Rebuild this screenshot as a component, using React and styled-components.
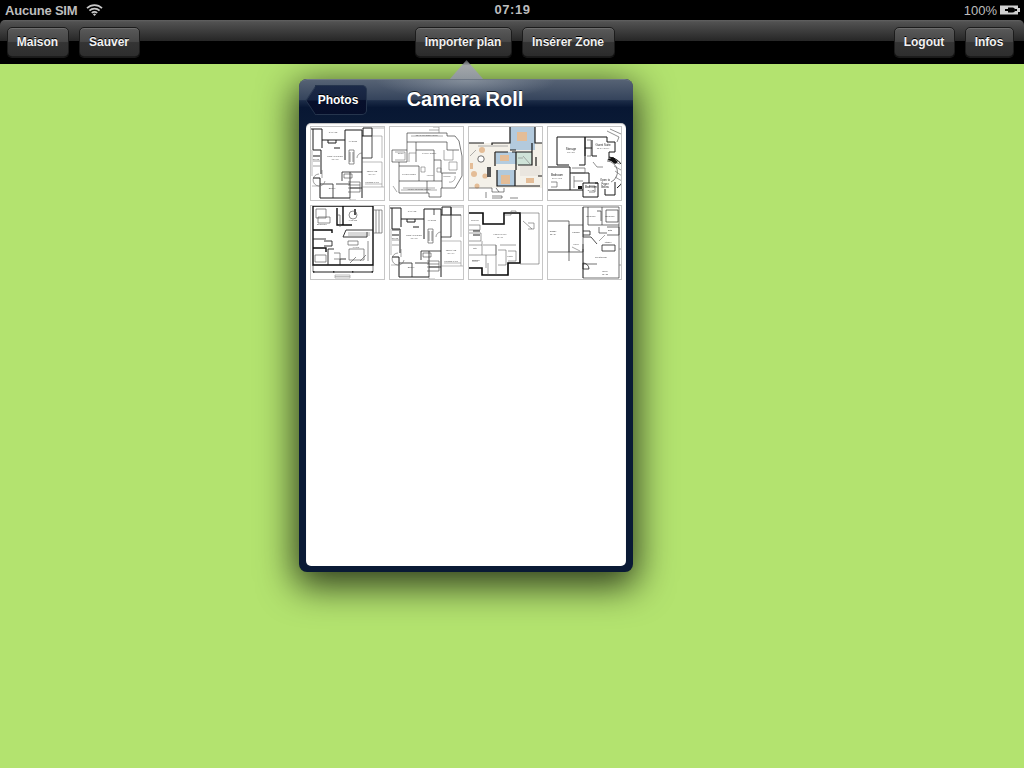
import styled, { createGlobalStyle } from 'styled-components'

const GlobalStyle = createGlobalStyle`
  html, body { margin: 0; padding: 0; height: 100%; overflow: hidden; }
  body { font-family: "Liberation Sans", Arial, sans-serif; background: #b3e36f; }
  #root { height: 100%; }
`

const Screen = styled.div`
  position: relative;
  display: flex;
  flex-direction: column;
  width: 1024px;
  height: 768px;
  background: #b3e36f;
  overflow: hidden;
`
const TopBars = styled.div`
  background: #000;
`
const StatusBar = styled.div`
  display: grid;
  grid-template-columns: 1fr auto 1fr;
  align-items: center;
  height: 20px;
  padding: 0 4px 0 5px;
  color: #bdbdbd;
  font-size: 13px;
  font-weight: bold;
`
const StatusLeft = styled.div`
  display: flex;
  align-items: center;
  gap: 9px;
  letter-spacing: -0.2px;
`
const StatusRight = styled.div`
  display: flex;
  align-items: center;
  justify-content: flex-end;
  gap: 3px;
  font-weight: normal;
`
const Clock = styled.div`
  letter-spacing: 0.6px;
  margin-top: -1px;
`
const Toolbar = styled.div`
  display: flex;
  justify-content: space-between;
  align-items: center;
  height: 44px;
  padding: 0 10px 0 7px;
  box-sizing: border-box;
  border-radius: 5px 5px 0 0;
  background: linear-gradient(#626262 0, #515151 2px, #262626 21px, #000 21px, #000 100%);
`
const Group = styled.div`
  display: flex;
  gap: 10px;
  margin-right: ${p => p.$shift || 0}px;
`
const BarButton = styled.button`
  height: 30px;
  padding: 0 1px 0 0;
  width: ${p => p.$w}px;
  box-sizing: border-box;
  border: 1px solid #1c1c1c;
  border-radius: 5px;
  background: linear-gradient(#5a5a5a 0, #474747 48%, #343434 52%, #2e2e2e 100%);
  box-shadow: inset 0 1px 0 rgba(255, 255, 255, 0.12), 0 1px 0 rgba(255, 255, 255, 0.1);
  color: #f2f2f2;
  font: bold 12px "Liberation Sans", Arial, sans-serif;
  text-shadow: 0 -1px 0 #000;
`
const Popover = styled.div`
  position: absolute;
  left: 299px;
  top: 79px;
  display: flex;
  flex-direction: column;
  width: 334px;
  height: 493px;
  padding: 0 7px 6px;
  box-sizing: border-box;
  border-radius: 8px;
  background: #0a1a35;
  box-shadow: 0 10px 36px 4px rgba(0, 0, 0, 0.74);
`
const Arrow = styled.div`
  position: absolute;
  left: 150px;
  top: -19px;
  width: 35px;
  height: 20px;
  background: linear-gradient(#3c3f42 0, #a3a7aa 28%, #8d959c 100%);
  clip-path: polygon(50% 0, 100% 100%, 0 100%);
`
const PopHeader = styled.div`
  position: relative;
  display: flex;
  align-items: center;
  justify-content: center;
  height: 44px;
  margin: 0 -7px;
  padding-bottom: 4px;
  border-radius: 8px 8px 0 0;
  border-top: 1px solid #6d7785;
  box-sizing: border-box;
  background:
    radial-gradient(ellipse 90px 20px at 50% 0, rgba(170, 178, 186, 0.55), transparent),
    linear-gradient(#566274 0, #35445c 46%, #1c2c47 48%, #081733 64%, #0a1a35 100%);
`
const Title = styled.div`
  margin-left: -2px;
  color: #fff;
  font-size: 20px;
  font-weight: bold;
  text-shadow: 0 -1px 0 rgba(0, 0, 0, 0.7);
`
const BackButton = styled.button`
  position: absolute;
  left: 16px;
  top: 5px;
  width: 52px;
  height: 30px;
  padding: 0 5px 0 0;
  border: 1px solid #26354d;
  border-left: 0;
  border-radius: 0 5px 5px 0;
  background: linear-gradient(#1c2a48 0, #16233f 48%, #070f2b 52%, #060e2a 100%);
  color: #fff;
  font: bold 12px "Liberation Sans", Arial, sans-serif;
  text-shadow: 0 -1px 0 #000;
  &::before {
    content: "";
    position: absolute;
    left: -10.5px;
    top: 3.5px;
    width: 21px;
    height: 21px;
    box-sizing: border-box;
    border-left: 1px solid #26354d;
    border-bottom: 1px solid #26354d;
    background: linear-gradient(135deg, #1c2a48 0, #16233f 49%, #070f2b 51%, #060e2a 100%);
    transform: scaleX(0.67) rotate(45deg);
  }
  span { position: relative; }
`
const Panel = styled.div`
  flex: 1;
  display: flex;
  flex-direction: column;
  border-radius: 5px;
  background: #fff;
  box-shadow: inset 0 1px 1px rgba(0, 0, 0, 0.25);
  padding: 3px 0 0 4px;
`
const Grid = styled.div`
  display: grid;
  grid-template-columns: repeat(4, 75px);
  grid-auto-rows: 75px;
  gap: 4px;
`
const Thumb = styled.svg`
  display: block;
  width: 75px;
  height: 75px;
  outline: 1px solid #c6c6c6;
  outline-offset: -1px;
  background: #fff;
  text { font-family: "Liberation Sans", Arial, sans-serif; }
`
const Art = styled.g`
  filter: blur(0.28px);
`

const Wall = ({ d, w = 1.2, c = '#111' }) => <path d={d} fill="none" stroke={c} strokeWidth={w} />
const Thin = ({ d, c = '#444', w = 0.65 }) => <path d={d} fill="none" stroke={c} strokeWidth={w} />
const Label = ({ x, y, s = 2, c = '#555', t }) => <text x={x} y={y} fontSize={s} fill={c} textAnchor="middle">{t}</text>

const WideHousePlan = ({ variant }) => (
  <>
    <Wall w={1} c="#1c1c1c" d="M1 3H12V14H35V4H52V10H62V2H53V10M52 10V72M3 3V24H11V48M12 14V22M35 14V34M10 72H40M10 52V72M3 52H10M3 30H10M30 22H24M18 14V17H26V14" />
    <Wall w={0.8} c="#222" d="M52 32H62V10M40 46V72M40 62H52M23 58V72M10 58H23M32 46H52M32 46V55M26 58H40" />
    <Thin d="M39 24H44V38H39ZM40 26V36M43 26V36M34 48H42V52H34ZM38 56H50V66H38M38 59H50M38 62H50" c="#444" w={0.6} />
    <Thin d="M52 36H72M72 36V61M52 61H74M55 58H72M62 2H75M62 10H72V32M2 24V50M2 60H10V70M40 72V74H46" c="#777" w={0.5} />
    <Thin d="M9 48A6 6 0 1 0 15 55M47 32A5 5 0 0 1 52 27M12 52V44M10 40H3M10 35H3" c="#555" w={0.55} />
    <Label x={23} y={7} s={2} t="GARAGE" />
    <Label x={25} y={31} s={2.4} t="GREAT ROOM" />
    <Label x={25} y={34} s={2} t="18 X 18" />
    <Label x={62} y={46} s={2.2} t="TERRACE" />
    <Label x={62} y={49} s={2} t="20 X 14" />
    <Label x={43} y={16} s={2} t="MASTER" />
    <Label x={22} y={63} s={2.2} t="BDRM" />
    <Label x={6} y={34} s={1.8} t="OFFICE" />
    <Label x={62} y={57} s={1.7} t="COVERED PATIO" />
    {variant && <Wall w={0.8} c="#222" d="M62 2V10H72M10 25H3M45 4V10" />}
  </>
)

const plans = [
  <WideHousePlan key="p1" />,
  <g key="p2">
    <Thin c="#333" w={0.65} d="M18 16V7H58V10H66L70 15L73 30V50L66 62H52V71H40V67H10V36H3V24H18V16M18 16H58V24M58 24H70M18 24V36H10M27 16V36M27 24H45V34H52V47H67M30 40H10M30 40V55M10 55H53M53 47V62M38 55V67M45 34V55" />
    <Thin c="#666" w={0.55} d="M22 10H54M40 4H50V7M44 1H50V4M6 26H16V34H6M27 27H20V36M55 24V34H64V24M60 36H68V44H60ZM32 41H36V46H32ZM48 42H52V46H48ZM14 62H46M12 64H48M4 60L8 66M66 50A5 5 0 0 1 60 56" />
    <Label x={38} y={10} s={1.9} t="REAR COVERED PORCH" />
    <Label x={40} y={28} s={2.1} t="FAMILY ROOM" />
    <Label x={20} y={49} s={2.1} t="LIVING ROOM" />
    <Label x={41} y={50} s={1.9} t="FOYER" />
    <Label x={58} y={51} s={2} t="DINING" />
    <Label x={30} y={64} s={1.8} t="FRONT COVERED PORCH" />
    <Label x={12} y={28} s={1.9} t="STUDY" />
  </g>,
  <g key="p3">
    <rect x="0" y="17" width="75" height="45" fill="#f4f1e9" />
    <rect x="42" y="0" width="25" height="24" fill="#b3cadd" />
    <rect x="28" y="26" width="20" height="12" fill="#b4cde0" />
    <rect x="29" y="44" width="18" height="16" fill="#b1c9dc" />
    <rect x="48" y="26" width="16" height="13" fill="#cfe3d8" />
    <rect x="52" y="40" width="20" height="10" fill="#eae6df" />
    <g fill="#e4bd97">
      <rect x="49" y="6" width="10" height="9" />
      <rect x="33" y="49" width="9" height="9" />
      <rect x="32" y="29" width="9" height="6" />
      <circle cx="14" cy="24" r="3" />
      <circle cx="6" cy="48" r="3" />
      <circle cx="17" cy="50" r="2.6" />
      <circle cx="9" cy="60" r="2.5" />
      <rect x="2" y="37" width="3" height="6" />
      <rect x="58" y="52" width="8" height="5" />
    </g>
    <rect x="19" y="41" width="4" height="10" fill="#555" />
    <circle cx="13" cy="33" r="3.2" fill="#fff" stroke="#333" strokeWidth="0.7" />
    <Wall w={1.2} c="#181818" d="M42 0H67V17H75M42 0V17H24V19M0 17H16M42 24H48M27 26V40M27 26H40M44 26H48V44M29 44V60H47M47 44V60H72M48 26H64V39H50M64 26V17M68 31V40M70 50H75" />
    <Thin c="#444" d="M0 62H24V66H36V62M28 62L31 66M18 66V72M42 72H50M24 70H34V72H24" />
    <Thin c="#888" d="M55 30L62 38M50 32H55M10 20H40M2 30L8 24" />
  </g>,
  <g key="p4">
    <Wall w={1} c="#161616" d="M10 11H38V39H32M10 11V39H22M38 11H60V16H68V26H62M38 11V30M38 22H45M45 14V30H50M62 26V34M0 41H23V47M0 41V64H23V47M23 64H36V71H51V57H36V64M23 47H42V57M51 57H48M68 56V69H58V63" />
    <path d="M62 31A17 17 0 0 1 70 62" fill="none" stroke="#111" strokeWidth="1" />
    <path d="M60 35A11 11 0 0 1 64 56" fill="none" stroke="#333" strokeWidth="0.6" />
    <path d="M66 36L73 38M67 40L74 44M68 45L75 50M68 51L75 55" fill="none" stroke="#555" strokeWidth="0.55" />
    <path d="M60 34L66 31L71 36L68 38L64 35Z" fill="#111" />
    <rect x="31" y="60" width="4" height="3" fill="#111" />
    <Thin c="#555" d="M60 5L72 11L70 16M63 3L74 8M25 42H38V47H25M27 50V62M27 55H36M4 56H10V61H4M40 14H44V30H40M42 60H48V66H42M46 36L50 41H56" />
    <Label x={24} y={24} s={3} c="#222" t="Storage" />
    <Label x={24} y={27} s={2} c="#444" t="18' x 18'" />
    <Label x={56} y={20} s={2.9} c="#222" t="Guest Suite" />
    <Label x={56} y={23} s={2} c="#444" t="13'-0&quot; x 13'-0&quot;" />
    <Label x={10} y={50} s={3} c="#222" t="Bedroom" />
    <Label x={10} y={53} s={2} c="#444" t="10'-0&quot; x 12'" />
    <Label x={44} y={62} s={3} c="#222" t="Bedroom" />
    <Label x={44} y={65} s={2} c="#444" t="11' x 12'" />
    <Label x={58} y={55} s={2.8} c="#222" t="Open to" />
    <Label x={58} y={58.5} s={2.8} c="#222" t="Foyer" />
    <Label x={58} y={62} s={2.8} c="#222" t="Below" />
  </g>,
  <g key="p5">
    <Wall w={1.4} c="#0a0a0a" d="M3 1H63V60H3V1M3 25H22V28M3 43H16V47M33 1V20H42M27 3V20H33M45 4V10" />
    <Wall w={0.9} c="#222" d="M36 25H63M36 25L33 32H57V27M3 34H16M14 41H22V36H14M18 60V44H24M36 54H30V60" />
    <Thin c="#555" d="M63 5H72V28H63M66 5V28M69 5V28M6 4H16V13H6ZM8 12H20V18H8ZM28 10H30V22M5 50H16V57H5ZM24 48H30V54H24M38 36H48V40H38ZM39 44H54V55H39ZM50 56L56 50M40 58L46 52M58 36V56M39 10A4 4 0 1 0 47 10A4 4 0 1 0 39 10" />
    <Thin c="#333" d="M3 60V67H63V60M3 67H63" />
    <path d="M3 66.2h1.4v1.4H3ZM23 66.2h1.4v1.4H23ZM42 66.2h1.4v1.4H42ZM61.6 66.2H63v1.4h-1.4Z" fill="#111" />
    <Thin c="#999" d="M25 70H40V73H25ZM25 71.5H40" />
    <Thin c="#888" d="M38 30H60M38 28H60" />
    <Label x={12} y={20} s={1.9} t="BEDROOM" />
    <Label x={43} y={16} s={1.9} t="KITCHEN" />
    <Label x={46} y={43} s={2} t="LIVING" />
  </g>,
  <WideHousePlan key="p6" variant />,
  <g key="p7">
    <Wall w={1.6} c="#080808" d="M0 8H15V19H36V8H52V58H40V70H14V63H0" />
    <Thin c="#555" w={0.55} d="M52 8H71V59H52M60 18H66V24H60M55 16L64 24M0 20H12V25H0M0 28H13V36H0M0 40H14M14 36V50M0 50H18V63M18 50H28V40H15M28 40V70M20 58V70M32 40H48M30 45H38V60H30M40 46H48V56H40M36 19V10H43V6H48V8M10 56H4" />
    <path d="M5 26H12M5 30H12" fill="none" stroke="#222" strokeWidth="1.2" />
    <Label x={32} y={30} s={2.2} t="Family Room" />
    <Label x={32} y={33} s={1.8} t="18 x 16" />
    <Label x={7} y={16} s={1.8} t="Bedroom" />
    <Label x={7} y={44} s={1.8} t="Bath" />
    <Label x={8} y={56} s={1.8} t="Bedroom" />
    <Label x={42} y={52} s={1.9} t="Master" />
  </g>,
  <g key="p8">
    <Thin c="#333" w={0.7} d="M0 16H22V47H0M22 20V47H36M22 20H36M36 2H72V73H36V2M36 2V32M36 39V47M36 44V73M41 2V20H72M55 2V20M50 6H54V16M59 5H71V17H59ZM60 22H72V30H60M22 47V56M52 22V28H60M36 59H50" />
    <Thin c="#222" w={0.8} d="M36 26H43V30H36M36 32H44L50 39M55 40H68V46H55ZM36 58A6 6 0 0 1 42 64L36 64Z" />
    <Thin c="#777" d="M25 42L33 46M58 30L52 36M72 44H75V60H72" />
    <Label x={44} y={12} s={2.2} c="#333" t="Bedroom" />
    <Label x={63} y={12} s={2.2} c="#333" t="Bedroom" />
    <Label x={6} y={27} s={2} c="#333" t="Garage" />
    <Label x={6} y={30} s={1.8} c="#444" t="22 x 24" />
    <Label x={29} y={28} s={2.1} c="#333" t="Laundry" />
    <Label x={29} y={40} s={2} c="#333" t="Foyer" />
    <Label x={63} y={26} s={2} c="#333" t="Bath" />
    <Label x={61} y={38} s={2} c="#333" t="Kitchen" />
    <Label x={54} y={53} s={2.2} c="#333" t="Great Room" />
    <Label x={58} y={67} s={2.2} c="#333" t="Deck" />
    <Label x={58} y={70} s={1.8} c="#444" t="12 x 28" />
  </g>,
]

const WifiIcon = () => (
  <svg width="17" height="12" viewBox="0 0 17 12">
    <path d="M1 4.2A10.6 10.6 0 0 1 16 4.2M3.4 6.7A7.2 7.2 0 0 1 13.6 6.7M5.8 9A3.8 3.8 0 0 1 11.2 9" fill="none" stroke="#c8c8c8" strokeWidth="1.7" />
    <path d="M8.5 12L6.9 10.2A2.3 2.3 0 0 1 10.1 10.2Z" fill="#c8c8c8" />
  </svg>
)

const BatteryIcon = () => (
  <svg width="20" height="10" viewBox="0 0 20 10">
    <rect x="0" y="0.5" width="18" height="9" fill="#d0d0d0" />
    <rect x="18" y="3" width="2" height="4" fill="#d0d0d0" />
    <path d="M8 2.5H12.5A2.5 2.5 0 0 1 12.5 7.5H8ZM15 4H17V6H15ZM5 4H8V6H5Z" fill="#000" />
  </svg>
)

export default function App() {
  return (
    <Screen>
      <GlobalStyle />
      <TopBars>
        <StatusBar>
          <StatusLeft>Aucune SIM <WifiIcon /></StatusLeft>
          <Clock>07:19</Clock>
          <StatusRight>100% <BatteryIcon /></StatusRight>
        </StatusBar>
        <Toolbar>
          <Group>
            <BarButton $w={62}>Maison</BarButton>
            <BarButton $w={61}>Sauver</BarButton>
          </Group>
          <Group $shift={4}>
            <BarButton $w={97}>Importer plan</BarButton>
            <BarButton $w={93}>Insérer Zone</BarButton>
          </Group>
          <Group>
            <BarButton $w={61}>Logout</BarButton>
            <BarButton $w={49}>Infos</BarButton>
          </Group>
        </Toolbar>
      </TopBars>
      <Popover>
        <Arrow />
        <PopHeader>
          <BackButton><span>Photos</span></BackButton>
          <Title>Camera Roll</Title>
        </PopHeader>
        <Panel>
          <Grid>
            {plans.map((plan, i) => (
              <Thumb key={i} viewBox="0 0 75 75"><Art>{plan}</Art></Thumb>
            ))}
          </Grid>
        </Panel>
      </Popover>
    </Screen>
  )
}
